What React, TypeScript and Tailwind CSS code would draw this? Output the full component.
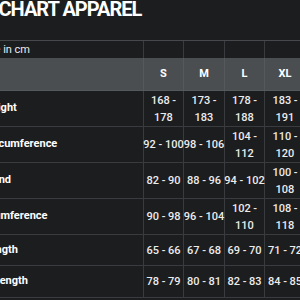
import React from "react";

type Row = { label: string; shift: string; h: string; v: string[] };

const rows: Row[] = [
  { label: "Height", shift: "-ml-[16px]", h: "h-[36px]", v: ["168 -\n178", "173 -\n183", "178 -\n188", "183 -\n191", "188 -\n196"] },
  { label: "Chest Circumference", shift: "-ml-[47px]", h: "h-[36px]", v: ["92 - 100", "98 - 106", "104 -\n112", "110 -\n120", "116 -\n126"] },
  { label: "Waistband", shift: "-ml-[41px]", h: "h-[36px]", v: ["82 - 90", "88 - 96", "94 - 102", "100 -\n108", "106 -\n114"] },
  { label: "Hip Circumference", shift: "-ml-[45px]", h: "h-[36px]", v: ["90 - 98", "96 - 104", "102 -\n110", "108 -\n118", "114 -\n124"] },
  { label: "Sleeve Length", shift: "-ml-[52px]", h: "h-[31px]", v: ["65 - 66", "67 - 68", "69 - 70", "71 - 72", "73 - 74"] },
  { label: "Body Length", shift: "-ml-[34px]", h: "h-[32px]", v: ["78 - 79", "80 - 81", "82 - 83", "84 - 85", "86 - 87"] },
];

const sizes = ["S", "M", "L", "XL", "XXL"];
const grid = "grid grid-cols-[144px_40px_41px_40px_41px_41px]";

export default function App() {
  return (
    <div className="w-[300px] h-[300px] overflow-hidden bg-[#1c1d1f] font-[Roboto,sans-serif] text-[#ececec]">
      <div className="w-[400px]">
        <h1 className="-ml-[43px] whitespace-nowrap text-[20px] leading-[18px] font-bold text-white tracking-[-1px]">
          SIZE CHART APPAREL
        </h1>
        <div className="mt-[22px] border-t border-[#47484b]">
          <div className={grid}>
            <div className="h-[17px] border-r border-[#3a3b3e] overflow-hidden whitespace-nowrap text-[11px] leading-[17px]">
              <span className="-ml-[20px]">Size in cm</span>
            </div>
            {sizes.map((s) => (
              <div key={s} className="h-[17px] border-r border-[#3a3b3e]" />
            ))}
          </div>
          <div className={`${grid} bg-[#4b4e51]`}>
            <div className="h-[33px] border-r border-b border-[#56595c]" />
            {sizes.map((s) => (
              <div
                key={s}
                className="h-[33px] border-r border-b border-[#56595c] flex items-center justify-center text-[11px] font-bold text-white"
              >
                {s}
              </div>
            ))}
          </div>
          {rows.map((r) => (
            <div key={r.label} className={grid}>
              <div className={`${r.h} border-r border-b border-[#3a3b3e] overflow-hidden whitespace-nowrap flex items-center text-[11px] font-bold text-white`}>
                <span className={r.shift}>{r.label}</span>
              </div>
              {r.v.map((val, i) => (
                <div
                  key={i}
                  className={`${r.h} border-r border-b border-[#3a3b3e] flex items-center justify-center whitespace-pre text-center text-[11px] leading-[17px] font-medium`}
                >
                  {val}
                </div>
              ))}
            </div>
          ))}
        </div>
      </div>
    </div>
  );
}
